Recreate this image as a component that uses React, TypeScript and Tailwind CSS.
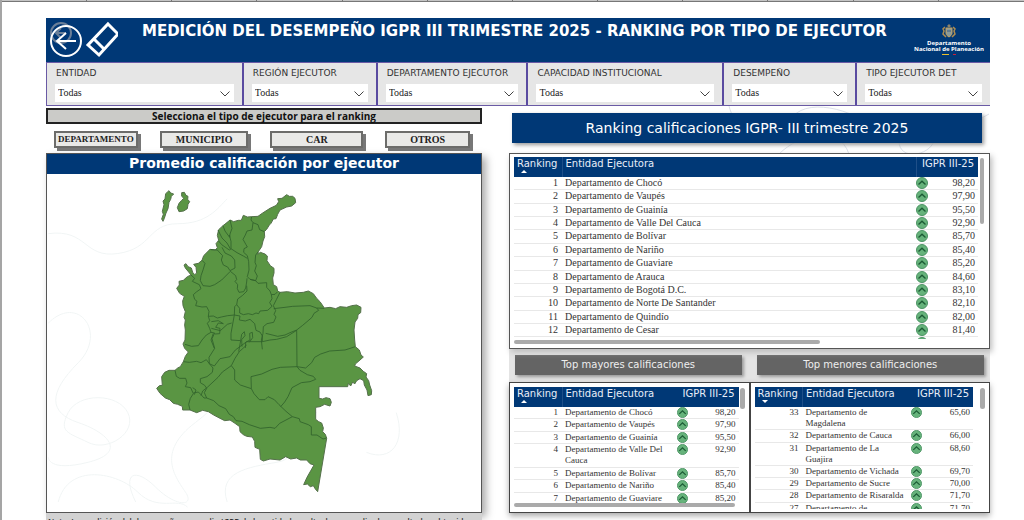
import React, { useState } from 'react';

interface Row {
  rank: number;
  name: string;
  score: string;
}

interface Filter {
  id: string;
  label: string;
}

const filters: Filter[] = [
  { id: 'entidad', label: 'ENTIDAD' },
  { id: 'region', label: 'REGIÓN EJECUTOR' },
  { id: 'departamento', label: 'DEPARTAMENTO EJECUTOR' },
  { id: 'capacidad', label: 'CAPACIDAD INSTITUCIONAL' },
  { id: 'desempeno', label: 'DESEMPEÑO' },
  { id: 'tipo', label: 'TIPO EJECUTOR DET' },
];

const ranking: Row[] = [
  { rank: 1, name: 'Departamento de Chocó', score: '98,20' },
  { rank: 2, name: 'Departamento de Vaupés', score: '97,90' },
  { rank: 3, name: 'Departamento de Guainía', score: '95,50' },
  { rank: 4, name: 'Departamento de Valle Del Cauca', score: '92,90' },
  { rank: 5, name: 'Departamento de Bolívar', score: '85,70' },
  { rank: 6, name: 'Departamento de Nariño', score: '85,40' },
  { rank: 7, name: 'Departamento de Guaviare', score: '85,20' },
  { rank: 8, name: 'Departamento de Arauca', score: '84,60' },
  { rank: 9, name: 'Departamento de Bogotá D.C.', score: '83,10' },
  { rank: 10, name: 'Departamento de Norte De Santander', score: '82,10' },
  { rank: 11, name: 'Departamento de Quindío', score: '82,00' },
  { rank: 12, name: 'Departamento de Cesar', score: '81,40' },
];

const lowest: Row[] = [
  { rank: 33, name: 'Departamento de Magdalena', score: '65,60' },
  { rank: 32, name: 'Departamento de Cauca', score: '66,00' },
  { rank: 31, name: 'Departamento de La Guajira', score: '68,60' },
  { rank: 30, name: 'Departamento de Vichada', score: '69,70' },
  { rank: 29, name: 'Departamento de Sucre', score: '70,00' },
  { rank: 28, name: 'Departamento de Risaralda', score: '71,70' },
  { rank: 27, name: 'Departamento de Cundinamarca', score: '71,70' },
];

const entityTypes = ['DEPARTAMENTO', 'MUNICIPIO', 'CAR', 'OTROS'];

function ScoreIcon({ className }: { className: string }) {
  return (
    <svg viewBox="0 0 12 12" className={className} aria-hidden="true">
      <circle cx="6" cy="6" r="5.5" fill="#66b37b" stroke="#4c9464" />
      <path d="M2.5 7.5 6 4.2l3.5 3.3" fill="none" stroke="#1c5c35" strokeWidth="1.4" />
    </svg>
  );
}

function SortMark({ down }: { down?: boolean }) {
  return (
    <svg viewBox="0 0 6 3" className="ml-1 h-[3px] w-[6px]" aria-hidden="true">
      <path d={down ? 'M0 0h6L3 3z' : 'M0 3h6L3 0z'} fill="#fff" />
    </svg>
  );
}

interface RankingTableProps {
  rows: Row[];
  small?: boolean;
  down?: boolean;
}

function RankingTable({ rows, small, down }: RankingTableProps) {
  return (
    <table
      className={`w-full table-fixed border-collapse font-['Liberation_Serif',serif] text-[#333] ${
        small ? 'text-[9px] leading-[11px]' : 'h-[193px] text-[10px] leading-[12px]'
      } ${small && !down ? 'h-[118px]' : ''} ${small && down ? 'h-[139px]' : ''}`}
    >
      <thead>
        <tr className="h-5 bg-[#003876] text-left align-top font-['DejaVu_Sans',sans-serif] text-[10px] leading-[13px] text-[#e8eef8]">
          <th className="h-5 w-12 whitespace-nowrap border-r border-[#1f4f88] pl-[3px] font-normal">
            Ranking
            <SortMark down={down} />
          </th>
          <th className="whitespace-nowrap pl-[3px] font-normal">Entidad Ejecutora</th>
          <th
            className={`w-[62px] whitespace-nowrap pr-1 text-right font-normal ${
              small ? '' : 'border-l border-[#1f4f88]'
            }`}
          >
            IGPR III-25
          </th>
        </tr>
      </thead>
      <tbody>
        {rows.map((row) => (
          <tr key={row.rank} className="border-b border-[#e8e8e8] align-top">
            <td className="pr-1 text-right">{row.rank}</td>
            <td className="pl-[3px] pr-[6px]">{row.name}</td>
            <td className="pr-[3px]">
              <div className="flex items-center justify-between">
                <ScoreIcon className={small ? 'size-[11px]' : 'size-3'} />
                {row.score}
              </div>
            </td>
          </tr>
        ))}
        {/* Edge of the next row, below the scroll area */}
        {!small && (
          <tr className="align-top">
            <td />
            <td />
            <td>
              <ScoreIcon className="size-3" />
            </td>
          </tr>
        )}
      </tbody>
    </table>
  );
}

function DepartmentsMap() {
  return (
    <svg
      viewBox="0 12 780 1038"
      className="ml-[83px] h-[346px] w-[260px]"
      role="img"
      aria-label="Mapa de Colombia por departamento"
    >
      <g fill="#5a9543" stroke="#55704b" strokeWidth="3" strokeLinejoin="round">
        <path d="M117 62 122 69 131 72 124 79 122 88 117 97 114 116 108 129 103 145 99 154 95 147 100 133 97 124 102 104 99 93 105 87 107 71z" />
        <path d="M155 68 163 67 168 76 174 79 173 88 179 95 174 103 172 116 161 123 147 125 142 113 147 100 154 92 161 85 155 78z" />
        <path d="M470 74 478 79 488 79 495 85 497 98 485 108 470 111 450 120 443 133 438 146 430 147 423 160 418 165 410 178 403 185 404 200 399 213 395 230 385 245 383 253 391 247 405 252 412 258 411 272 421 287 432 295 432 309 428 324 430 344 440 350 443 363 450 367 472 365 495 369 520 367 535 363 550 371 560 385 570 395 583 414 600 412 617 416 630 410 650 412 665 407 680 405 693 412 692 428 684 434 683 445 675 456 672 480 674 510 676 530 688 540 693 555 700 561 690 570 676 582 674 588 690 594 700 604 710 611 708 621 716 632 719 645 725 662 724 674 714 677 711 660 703 645 701 632 690 626 680 632 674 642 668 636 662 648 655 640 653 650 567 650 567 685 578 687 588 683 600 686 604 697 600 708 584 703 570 710 557 712 557 748 566 755 575 759 580 774 578 785 586 793 590 805 563 965 556 957 550 947 541 950 532 942 521 944 531 922 552 885 540 881 530 870 511 870 500 864 482 867 467 860 450 870 420 867 400 873 391 868 389 838 375 832 374 814 367 801 350 799 340 794 330 785 329 770 315 760 300 750 284 752 270 745 251 735 235 725 218 721 200 728 180 720 158 720 157 709 143 703 130 700 119 689 106 684 90 670 80 655 88 647 97 646 95 620 104 607 117 601 135 601 143 594 151 590 160 575 166 559 175 546 164 535 159 522 165 510 166 480 164 465 166 450 162 442 166 425 159 407 158 393 163 379 149 370 140 355 148 345 147 334 160 331 172 320 183 315 176 306 166 294 162 285 168 281 174 290 184 294 188 307 194 314 200 309 198 292 191 283 205 280 216 271 221 257 240 238 256 240 262 233 258 221 266 211 262 196 266 179 279 167 288 160 300 150 311 155 325 151 334 151 340 136 352 141 365 140 384 139 398 129 420 115 439 106 446 95 443 86 456 85z" />
      </g>
      <g fill="none" stroke="#30622b" strokeWidth="2.5" strokeLinejoin="round">
        <path d="M300 150 306 175 300 192 299 202 285 183 279 167M264 180 276 204 291 219 302 238 298 240 275 224 265 212M298 195 303 214 303 236 321 248 340 258 352 265" />
        <path d="M365 140 363 150 369 158 366 180 351 183 346 195 339 208 348 224 352 231 342 236 341 247 352 257 356 275 357 300 352 320 360 328 377 332 382 318 374 303 379 287 375 277 377 255 385 245M369 158 384 164 389 179 403 185" />
        <path d="M242 239 262 240 270 249 278 257 274 270 280 285 293 291 300 302 315 294 314 270 304 258 285 249 276 232M216 271 225 280 219 300 213 317 211 332 219 347 240 349 254 344 275 330 301 304M301 304 317 317 320 329 315 334 323 344 322 356 327 367 341 365 347 354 350 336 351 325" />
        <path d="M183 315 194 325 187 334 208 344 213 356 199 366 190 374 194 388 201 394 197 407 216 411 230 410 237 424 235 439 250 438 262 444 274 441 293 437 313 435 314 410 320 404 323 387 338 376 351 363 350 347M360 328 377 332 384 340 410 338 410 352 420 363 424 374 435 373 442 366M320 404 329 415 329 429 340 434 355 431 367 434 378 429 386 431 390 423 413 421 426 409 419 398 426 386 424 374" />
        <path d="M450 367 439 389 430 407 437 422 432 433 438 441 431 457 411 461 400 470 399 490 394 510 397 538M431 416 465 412 488 409 540 407 560 414 583 415M560 414 566 421 552 430 546 442 531 455 518 466 500 480 480 488 465 495 443 499 407 490M500 480 501 590" />
        <path d="M313 435 330 438 328 450 346 453 360 448 374 461 378 481 390 486 397 498M397 498 397 515 420 510 440 508 470 500 500 481M235 439 239 452 232 460 239 475 243 487 254 489 246 506 254 535 237 562 238 581 253 588 270 566 300 560 316 540 350 515 397 515M313 435 303 490 303 510 332 512 326 545M244 455 265 452 280 461 265 459 257 472 270 475 269 491 255 492M244 475 271 482 292 463 305 459M250 490 243 510 253 535M332 512 335 493 343 485 345 497 335 509 336 530M346 534 347 517 360 510 359 490 367 487 368 503 358 517" />
        <path d="M165 523 185 529 205 527 216 510 229 495 243 487M160 575 178 577 200 574 213 578 229 569 238 581 249 594 247 607 231 620 211 626 211 638 224 646 230 655 223 668 230 684" />
        <path d="M135 601 139 619 149 625 167 625 171 639 166 650 182 653 190 671 181 685 176 703 180 720M190 669 205 666 215 676 222 684 230 684 251 692 267 707 287 716 298 733 310 740 318 752 336 754 358 764 391 775 420 772 435 775 449 760 468 750 487 740M193 674 198 660 188 653M213 677 218 663 233 651 264 622 277 606 304 587 315 565 328 545 350 525" />
        <path d="M304 587 314 600 314 630 331 645 364 656 372 671 388 689 405 689 414 680 433 689 447 704 468 724 487 740 508 746 510 755 535 764 544 770 544 795 561 795 579 807 590 804M364 656 363 620 395 612 426 598 451 592 501 590 527 594 545 578 554 562 572 552 599 543 645 540 676 530M501 590 510 601 532 614 550 619 557 628 540 635 514 638 486 653 474 680 464 696 452 710" />
      </g>
    </svg>
  );
}

function HeaderIcons() {
  return (
    <>
      <button type="button" aria-label="Volver" className="shrink-0">
        <svg viewBox="0 0 36 40" className="h-10 w-9" fill="none">
          <circle cx="15" cy="13" r="10" stroke="#6b7f98" strokeWidth="2" />
          <path d="M20 13H10m5-5-5 5 5 5" stroke="#6b7f98" strokeWidth="2" />
          <circle cx="20" cy="21" r="15" stroke="#fff" strokeWidth="2" />
          <path d="M30 21H11m9-8-9 8 9 8" stroke="#fff" strokeWidth="2" />
        </svg>
      </button>
      <button type="button" aria-label="Borrar filtros" className="shrink-0">
        <svg viewBox="0 0 36 40" className="h-10 w-9" fill="none" stroke="#fff" strokeWidth="3">
          <path d="M26 4 36 14 17 35 6 25zM12 19l10 10" />
        </svg>
      </button>
    </>
  );
}

function DnpLogo() {
  return (
    <div className="mr-[3px] flex w-[76px] shrink-0 flex-col items-center pt-[6px] text-center font-['Open_Sans',sans-serif] text-[6px] font-bold leading-[6px] text-white">
      <svg viewBox="0 0 14 15" className="mb-px h-[15px] w-[14px]" aria-hidden="true">
        <path d="M3 3 1 5l1 2-1 3 3 3M11 3l2 2-1 2 1 3-3 3" fill="none" stroke="#b08d4f" strokeWidth="1.5" />
        <path d="M4 4h6v5c0 2-1.500 3-3 4-1.500-1-3-2-3-4z" fill="#8a9a9a" stroke="#c5a25d" />
        <path d="M5 2 7 0l2 2-2 1.500z" fill="#8f8468" />
        <path d="M5 7h4" stroke="#3d5a80" />
      </svg>
      <span className="whitespace-nowrap">Departamento</span>
      <span className="whitespace-nowrap">Nacional de Planeación</span>
      <span className="mt-[2px] flex gap-1">
        <i className="h-px w-[7px] bg-[#e8c02c]" />
        <i className="h-px w-[3px] bg-[#c81f3a]" />
      </span>
    </div>
  );
}

function App() {
  const [values, setValues] = useState<Record<string, string>>({});

  return (
    <div className="flex max-h-screen min-h-screen flex-col overflow-hidden border-l-2 border-[#a5a5a5] bg-white font-['DejaVu_Sans',sans-serif] text-[#333]">
      <div className="grid h-[2px] shrink-0 grid-cols-12 divide-x divide-[#777] border-b border-[#777] bg-[#c4c4c4]">
        {filters.concat(filters).map((_, i) => (
          <span key={i} />
        ))}
      </div>
      <main className="pl-11 pr-[34px] pt-4">
        <header className="flex h-[44px] bg-[#003876]">
          <HeaderIcons />
          <h1 className="flex-1 whitespace-nowrap pl-6 pt-[3px] text-[15px] font-bold leading-5 text-white">
            MEDICIÓN DEL DESEMPEÑO IGPR III TRIMESTRE 2025 - RANKING POR TIPO DE EJECUTOR
          </h1>
          <DnpLogo />
        </header>

        {/* Filters */}
        <div className="grid grid-cols-[197fr_134fr_151fr_196fr_133fr_133fr] border-y border-l border-[#6a5aa5] bg-[#e6e6e6]">
          {filters.map((filter, i) => (
            <div
              key={filter.id}
              className={`flex h-[42px] flex-col px-2 pt-[5px] ${
                i < filters.length - 1 ? 'border-r-2 border-[#5a4ba0]' : ''
              }`}
            >
              <label htmlFor={filter.id} className="whitespace-nowrap pl-px text-[9px] leading-[11px]">
                {filter.label}
              </label>
              <div className="relative mt-[5px]">
                <select
                  id={filter.id}
                  value={values[filter.id] || ''}
                  onChange={(e) => setValues({ ...values, [filter.id]: e.target.value })}
                  className="block h-[18px] w-full appearance-none bg-white pl-[3px] font-['Liberation_Serif',serif] text-[10px] leading-[18px] text-[#222]"
                >
                  <option value="">Todas</option>
                </select>
                <svg
                  viewBox="0 0 10 6"
                  className="pointer-events-none absolute right-1 top-[7px] h-[6px] w-[10px]"
                  fill="none"
                  stroke="#444"
                >
                  <path d="M.5.5 5 5 9.500.5" />
                </svg>
              </div>
            </div>
          ))}
        </div>

        <div className="grid grid-cols-[436fr_481fr] gap-x-[27px]">
          {/* Map column */}
          <section className="pt-[2px]">
            <p className="h-4 border-2 border-[#222] bg-[#cbcbc8] text-center font-['Open_Sans',sans-serif] text-[10px] font-bold leading-[13px] text-[#111]">
              Selecciona el tipo de ejecutor para el ranking
            </p>
            <div className="grid grid-cols-[83fr_88fr_92fr_84fr] gap-x-[22px] pb-[5px] pl-2 pr-3 pt-[7px]">
              {entityTypes.map((type) => (
                <button
                  type="button"
                  key={type}
                  className={`h-[17px] min-w-0 border-2 border-[#6c6c6a] bg-[#e9e9e7] font-['Liberation_Serif',serif] font-bold leading-[13px] text-[#222] shadow-[3px_3px_0_#777] ${
                    type.length > 10 ? 'text-[9px]' : 'text-[10px]'
                  }`}
                >
                  {type}
                </button>
              ))}
            </div>
            <div className="border border-[#555] bg-white shadow-[4px_4px_8px_#aaa]">
              <h2 className="h-5 bg-[#003876] text-center text-[14px] font-bold leading-[18px] text-white">
                Promedio calificación por ejecutor
              </h2>
              <div className="relative h-[338px] overflow-hidden">
                <svg
                  viewBox="0 0 434 340"
                  className="absolute inset-0 size-full"
                  fill="none"
                  stroke="#f1f5f5"
                  aria-hidden="true"
                >
                  <path d="M0 60c40-5 35 25 70 20s30-30 60-30 40-15 50-25M0 150c30-30 60 10 30 40s-30 50 0 60 50 30 10 40-40-5-40-5M10 330c10-40 60-30 80-10s40 5 50 15M88 330c-15-30 0-35 20-15s40 20 30 5-30-40 10-70 30-50 60-40M180 330c-10-30 20-35 50-40s10-40 40-50M350 240c10 30-5 50-30 40M20 240c10-20 50-20 60 0s-20 40-40 30-30-10-20-30z" />
                </svg>
                <div className="relative">
                  <DepartmentsMap />
                </div>
              </div>
            </div>
            <p className="overflow-hidden whitespace-nowrap bg-[#d2d2d2] pl-[2px] pt-1 font-['Open_Sans',sans-serif] text-[8px] font-semibold leading-[10px]">
              Nota: La medición del desempeño promedio IGPR de la entidad resulta de promediar los resultados obtenidos
            </p>
          </section>

          {/* Ranking column */}
          <section className="relative">
            <svg
              viewBox="0 0 481 50"
              className="absolute inset-x-0 top-0 h-[50px] w-full"
              fill="none"
              stroke="#dde1ea"
              aria-hidden="true"
            >
              <path d="M220 0c5 20 20 30 40 30M280 20c5-30 60-20 80 0M270 48c20-20 60-30 70 0M390 35c0 20 30 15 35 0M440 30l40-22" />
            </svg>
            <h2 className="relative ml-[3px] mr-2 mt-[7px] h-[30px] bg-[#003876] text-center text-[14px] leading-[31px] text-white shadow-[2px_2px_4px_#999]">
              Ranking calificaciones IGPR- III trimestre 2025
            </h2>
            <div className="relative mt-[10px] h-[196px] border border-[#555] bg-white pb-1 pl-1 pr-[11px] pt-[3px] shadow-[2px_3px_6px_#bbb]">
              <div className="h-[182px] overflow-hidden">
                <RankingTable rows={ranking} />
              </div>
              <div className="mt-px h-1 w-[306px] rounded-full bg-[#aaa]" />
              <div className="absolute right-[5px] top-1 h-[66px] w-1 rounded-full bg-[#aaa]" />
            </div>

            <div className="grid grid-cols-2 bg-[#e4e4e4] pb-[7px] pt-[6px]">
              <h3 className="ml-[6px] mr-2 h-5 bg-[#646464] text-center text-[10px] leading-5 text-[#eee] shadow-[2px_2px_3px_#999]">
                Top mayores calificaciones
              </h3>
              <h3 className="ml-[7px] mr-[6px] h-5 bg-[#646464] text-center text-[10px] leading-5 text-[#eee] shadow-[2px_2px_3px_#999]">
                Top menores calificaciones
              </h3>
            </div>
            <div className="grid grid-cols-2 shadow-[0_3px_6px_#aaa]">
              <div className="relative h-[131px] border border-[#444] bg-white pl-1 pr-[10px] pt-1">
                <div className="h-[116px] overflow-hidden">
                  <RankingTable rows={ranking.slice(0, 7)} small />
                </div>
                <div className="h-1 w-[221px] rounded-full bg-[#aaa]" />
                <div className="absolute right-1 top-[5px] h-[21px] w-[5px] rounded-full bg-[#aaa]" />
              </div>
              <div className="relative h-[131px] border border-[#444] bg-white pl-1 pr-4 pt-1">
                <div className="h-[122px] overflow-hidden">
                  <RankingTable rows={lowest} small down />
                </div>
                <div className="absolute right-1 top-[5px] h-[21px] w-[5px] rounded-full bg-[#aaa]" />
              </div>
            </div>
          </section>
        </div>
      </main>
    </div>
  );
}

export default App;
